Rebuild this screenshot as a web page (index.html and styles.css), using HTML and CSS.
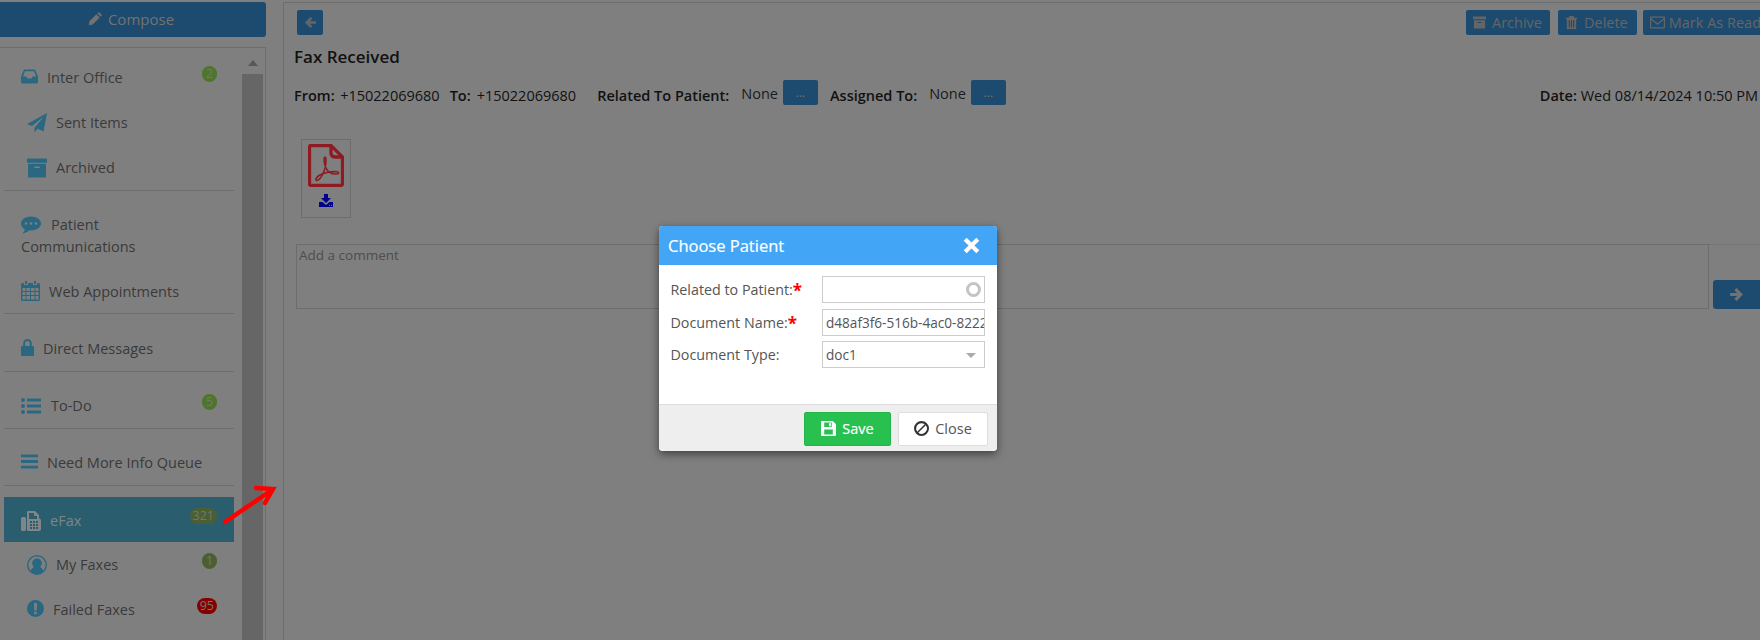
FILE: index.html
```html
<!DOCTYPE html>
<html lang="en">
<head>
<meta charset="utf-8">
<title>Fax Received</title>
<link rel="stylesheet" href="styles.css">
</head>
<body>
<div class="app">
  <aside class="side">
    <button class="compose"><svg class="ic ic-pencil" viewBox="0 0 16 16"><path d="M11.5 1 15 4.500 13.500 6 10 2.500ZM9 3.500 12.500 7 5 14.500 0.800 15.200 1.500 11Z"/></svg>Compose</button>
    <div class="navbox">
      <nav class="nav">
        <div class="group g1">
          <a class="item"><svg class="ic w17" viewBox="0 0 17 14"><path fill-rule="evenodd" d="M3 0H14L17 7V12.500Q17 14 15.500 14H1.500Q0 14 0 12.500V7ZM4 1.800 2 7H5.500L6.500 9H10.500L11.500 7H15L13 1.800Z"/></svg>Inter Office<span class="badge green">2</span></a>
          <a class="item sub"><svg class="ic w20" viewBox="0 0 20 20"><path d="M20 0 16.500 18.500 10.500 15.800 7.500 19.500V14.800L17 3.500 5 13 0 11Z"/></svg>Sent Items</a>
          <a class="item sub"><svg class="ic w20" viewBox="0 0 19 18"><path fill-rule="evenodd" d="M0 0H19V4H0ZM1 5H18V18H1ZM7 7.500V9H12V7.500Z"/></svg>Archived</a>
        </div>
        <div class="group g2">
          <a class="item wrap"><svg class="ic w20 mr10" viewBox="0 0 20 17"><path fill-rule="evenodd" d="M10 0C15.500 0 20 3 20 7S15.500 14 10 14L8 13.900C6 15.800 3.500 16.600 1.500 16.800 3 15.500 3.800 14 3.800 12.800 1.500 11.600 0 9.500 0 7 0 3 4.500 0 10 0ZM5 5.700A1.300 1.300 0 1 0 5 8.300 1.300 1.300 0 1 0 5 5.700ZM10 5.700A1.300 1.300 0 1 0 10 8.300 1.300 1.300 0 1 0 10 5.700ZM15 5.700A1.300 1.300 0 1 0 15 8.300 1.300 1.300 0 1 0 15 5.700Z"/></svg>Patient<br>Communications</a>
          <a class="item last"><svg class="ic w19" viewBox="0 0 19 20"><path fill-rule="evenodd" d="M4 0H6V3H4ZM13 0H15V3H13ZM1.500 2H3V4H7V2H12V4H16V2H17.500Q19 2 19 3.500V18.500Q19 20 17.500 20H1.500Q0 20 0 18.500V3.500Q0 2 1.500 2ZM1.500 7V10H4.500V7ZM5.500 7V10H9V7ZM10 7V10H13.500V7ZM14.500 7V10H17.500V7ZM1.500 11V14H4.500V11ZM5.500 11V14H9V11ZM10 11V14H13.500V11ZM14.500 11V14H17.500V11ZM1.500 15V18.500H4.500V15ZM5.500 15V18.500H9V15ZM10 15V18.500H13.500V15ZM14.500 15V18.500H17.500V15Z"/></svg>Web Appointments</a>
        </div>
        <div class="group g3">
          <a class="item"><svg class="ic w13" viewBox="0 0 13 17"><path fill-rule="evenodd" d="M6.500 0C9 0 10.800 1.800 10.800 4.300V7H12Q13 7 13 8V16Q13 17 12 17H1Q0 17 0 16V8Q0 7 1 7H2.200V4.300C2.200 1.800 4 0 6.500 0ZM6.500 2C5 2 4.200 3 4.200 4.300V7H8.800V4.300C8.800 3 8 2 6.500 2Z"/></svg>Direct Messages</a>
        </div>
        <div class="group g4">
          <a class="item"><svg class="ic w20" viewBox="0 0 20 16"><path d="M0 2A2 2 0 1 0 4 2 2 2 0 1 0 0 2ZM0 8A2 2 0 1 0 4 8 2 2 0 1 0 0 8ZM0 14A2 2 0 1 0 4 14 2 2 0 1 0 0 14ZM6 0.500H20V3.500H6ZM6 6.500H20V9.500H6ZM6 12.500H20V15.500H6Z"/></svg>To-Do<span class="badge green">5</span></a>
        </div>
        <div class="group g4">
          <a class="item"><svg class="ic w17" viewBox="0 0 17 14"><path d="M0 0H17V2.800H0ZM0 5.600H17V8.400H0ZM0 11.200H17V14H0Z"/></svg>Need More Info Queue</a>
        </div>
        <a class="item active"><svg class="ic w20 mr9" viewBox="0 0 20 20"><path fill-rule="evenodd" d="M1.500 6H3.500Q5 6 5 7.500V18.500Q5 20 3.500 20H1.500Q0 20 0 18.500V7.500Q0 6 1.500 6ZM7 0H14L18 4V7.300Q20 7.800 20 9.500V18Q20 20 18 20H7.500Q6 20 6 18.500V1Q6 0 7 0ZM8 2V8H16V5H13V2ZM9 10V12H11V10ZM12 10V12H14V10ZM15 10V12H17V10ZM9 13V15H11V13ZM12 13V15H14V13ZM15 13V15H17V13ZM9 16V18H11V16ZM12 16V18H14V16ZM15 16V18H17V16Z"/></svg>eFax<span class="badge olive">321</span></a>
        <a class="item sub"><svg class="ic w20" viewBox="0 0 20 20"><path fill-rule="evenodd" d="M10 0A10 10 0 1 1 10 20 10 10 0 1 1 10 0ZM10 1.500A8.500 8.500 0 0 0 3.800 15.800C4.500 13.500 5.800 12.500 7 12 5.800 11 5.200 9.700 5.200 8.300 5.200 5.700 7.300 3.600 10 3.600S14.800 5.700 14.800 8.300C14.800 9.700 14.200 11 13 12 14.200 12.500 15.500 13.500 16.200 15.800A8.500 8.500 0 0 0 10 1.500Z"/></svg>My Faxes<span class="badge olive">1</span></a>
        <a class="item sub"><svg class="ic w17" viewBox="0 0 17 17"><path fill-rule="evenodd" d="M8.500 0A8.500 8.500 0 1 1 8.500 17 8.500 8.500 0 1 1 8.500 0ZM7 3 7.300 10.500H9.700L10 3ZM7.200 11.800V14.300H9.800V11.800Z"/></svg>Failed Faxes<span class="badge red">95</span></a>
      </nav>
      <div class="scrollbar">
        <div class="sb-top"><span class="sb-arrow"></span></div>
        <div class="sb-thumb"></div>
      </div>
    </div>
  </aside>

  <main class="main">
    <div class="toolbar">
      <button class="btn btn-back"><svg class="ic-btn" viewBox="0 0 14 14"><path d="M7 1 9 3 6.300 5.600H13V8.400H6.300L9 11 7 13 1 7Z"/></svg></button>
      <div class="actions">
        <button class="btn"><svg class="ic-btn" viewBox="0 0 14 13"><path fill-rule="evenodd" d="M0 0H14V3H0ZM1 4H13V13H1ZM5 6V7H9V6Z"/></svg>Archive</button>
        <button class="btn btn-del"><svg class="ic-btn" viewBox="0 0 14 14"><path fill-rule="evenodd" d="M5 0H9L10 2H13V3.500H12V14H2V3.500H1V2H4ZM4 4.500V12.500H5.300V4.500ZM6.400 4.500V12.500H7.600V4.500ZM8.700 4.500V12.500H10V4.500Z"/></svg>Delete</button>
        <button class="btn btn-mark"><svg class="ic-btn wide" viewBox="0 0 15 12"><path fill-rule="evenodd" d="M1 0H14Q15 0 15 1V11Q15 12 14 12H1Q0 12 0 11V1Q0 0 1 0ZM1.200 1.200V1.800L7.500 6.800 13.800 1.800V1.200ZM1.200 3.300V10.800H13.800V3.300L7.500 8.400Z"/></svg>Mark As Read</button>
      </div>
    </div>
    <h1 class="title">Fax Received</h1>
    <div class="meta">
      <b class="k">From:</b><span class="v from">+15022069680</span>
      <b class="k to">To:</b><span class="v tov">+15022069680</span>
      <b class="k rel">Related To Patient:</b><span class="none">None</span><button class="btn dots">...</button>
      <b class="k asg">Assigned To:</b><span class="none none2">None</span><button class="btn dots">...</button>
      <span class="date"><b class="k">Date:</b> Wed 08/14/2024 10:50 PM</span>
    </div>
    <div class="attach">
      <svg class="pdf" viewBox="0 0 36 43"><path d="M3 1.500H23L34.500 13V39.500Q34.500 41.500 32.500 41.500H3Q1.500 41.500 1.500 39.500V3Q1.500 1.500 3 1.500Z" fill="none" stroke-width="3.300"/><path d="M23 1.500V9Q23 13 27 13H34.500" fill="none" stroke-width="3.300"/><path d="M17 13C15.500 13 16 20 18 24 19.500 27.500 23 30.500 29 30 31.500 29.500 31 28 29 27.800 24 27 16 28.800 11 31.500 8.500 33 7 36 8.500 36.500 11 37 15 31 17 24.500 18 20 18.500 13 17 13Z" fill="none" stroke-width="1.600"/></svg>
      <svg class="dl" viewBox="0 0 14 13"><path fill-rule="evenodd" d="M5 0H9V4H12L7 9 2 4H5ZM0 8H3.500L7 11 10.500 8H14V13H0ZM10 10.800V11.800H11V10.800ZM12 10.800V11.800H13V10.800Z"/></svg>
    </div>
    <div class="comment">
      <textarea class="comment-box" placeholder="Add a comment"></textarea>
      <button class="btn send"><svg class="ic-send" viewBox="0 0 14 14"><path d="M7 1 13 7 7 13 5 11 7.700 8.400H1V5.600H7.700L5 3Z"/></svg></button>
    </div>
  </main>
</div>

<div class="overlay"></div>

<svg class="annot" viewBox="0 0 56 42"><path d="M3 39 50 7M34 5 51 6 43 20" fill="none" stroke="#f00" stroke-width="4.500" stroke-linecap="round"/></svg>

<section class="modal">
  <header class="modal-head">
    <h2 class="modal-title">Choose Patient</h2>
    <svg class="modal-x" viewBox="0 0 14 14"><path d="M3 .6 7 4.600 11 .6 13.400 3 9.400 7 13.400 11 11 13.400 7 9.400 3 13.400 .6 11 4.600 7 .6 3Z"/></svg>
  </header>
  <div class="modal-body">
    <label class="lbl">Related to Patient:<span class="req">*</span></label>
    <div class="field"><input class="inp" type="text"><span class="ring"></span></div>
    <label class="lbl">Document Name:<span class="req">*</span></label>
    <div class="field"><input class="inp" type="text" value="d48af3f6-516b-4ac0-8222-6a1c03d7e9f4"></div>
    <label class="lbl">Document Type:</label>
    <div class="field"><input class="inp" type="text" value="doc1"><span class="caret"></span></div>
  </div>
  <footer class="modal-foot">
    <button class="mbtn save"><svg class="ic-m" viewBox="0 0 14 14"><path fill-rule="evenodd" d="M1 0H11L14 3V13Q14 14 13 14H1Q0 14 0 13V1Q0 0 1 0ZM3 1.500V5.500H10V1.500ZM3 8V12.500H11V8ZM7.500 2H9.300V5H7.500Z"/></svg>Save</button>
    <button class="mbtn close"><svg class="ic-m" viewBox="0 0 14 14"><path fill-rule="evenodd" d="M7 0A7 7 0 1 1 7 14 7 7 0 1 1 7 0ZM7 2A5 5 0 0 0 3 10L10 3A5 5 0 0 0 7 2ZM11 4 4 11A5 5 0 0 0 11 4Z"/></svg>Close</button>
  </footer>
</section>
</body>
</html>
```
FILE: styles.css
```css
* { box-sizing: border-box; }
html, body { margin: 0; height: 100%; overflow: hidden; }
body { width: 1760px; height: 640px; background: #cecece; font: 14.500px/22px "Open Sans", "Liberation Sans", sans-serif; color: #5e5e5e; position: relative; }
button { font-family: inherit; }
.app { display: flex; height: 640px; }

/* sidebar */
.side { width: 266px; flex: none; padding-top: 2px; }
.compose { display: flex; align-items: center; justify-content: center; width: 266px; height: 35px; border: 0; border-radius: 0 3px 3px 0; background: #3078b3; color: #b8b8b8; font-size: 15px; padding: 0 4px 2px 0; }
.compose .ic-pencil { width: 15px; height: 15px; margin-right: 5px; fill: #b8b8b8; vertical-align: 0; }
.navbox { display: flex; margin-top: 10px; height: 593px; width: 266px; border-top: 1px solid #b1b1b1; border-right: 1px solid #b1b1b1; }
.nav { width: 242px; padding-left: 4px; flex: none; }
.scrollbar { width: 21px; flex: none; display: flex; flex-direction: column; }
.sb-top { height: 26px; display: flex; justify-content: center; padding-top: 12px; }
.sb-arrow { width: 0; height: 0; border: 5.500px solid transparent; border-top: 0; border-bottom: 6px solid #8e8e8e; }
.sb-thumb { flex: 1; background: #a5a5a5; }
.group { border-bottom: 1px solid #b1b1b1; width: 230px; }
.g1 { padding-top: 7px; }
.g2 { padding-top: 10px; }
.g3 { padding-top: 12px; }
.g4 { padding-top: 11px; }
.item { display: block; position: relative; width: 230px; padding: 11.500px 0 11.500px 17px; line-height: 22px; color: #5e5e5e; }
.item.sub { padding-left: 23px; }
.item.wrap { padding-top: 12.500px; padding-bottom: 12px; }
.item.last { padding-bottom: 10px; }
.item.active { margin-top: 11px; background: #4598b2; color: #c9d6dc; padding-top: 13px; padding-bottom: 10px; }
.ic { display: inline-block; vertical-align: -2px; fill: #44a8d2; height: 17px; margin-right: 10px; }
.active .ic { fill: #cfd8dc; }
.w13 { width: 13px; margin-right: 9px; }
.w17 { width: 17px; margin-right: 9px; }
.w19 { width: 19px; margin-right: 9px; height: 20px; vertical-align: -4px; }
.w20 { width: 20px; height: 20px; vertical-align: -5px; }
.sub .ic { margin-right: 9px; }
.mr9 { margin-right: 9px; }
.mr10 { margin-right: 10px; }
.badge { position: absolute; right: 17px; top: 11px; min-width: 15px; height: 16px; padding: 0 3px; border-radius: 8px; font-size: 12.500px; line-height: 16px; text-align: center; color: #bcbcbc; }
.green { background: #80bb48; }
.olive { background: #7a9a52; }
.red { background: #d60000; }

/* main */
.main { flex: 1; min-width: 0; margin-left: 17px; margin-top: 2px; border-left: 1px solid #b1b1b1; border-top: 1px solid #b1b1b1; padding-left: 10px; overflow: hidden; color: #1c1c1c; }
.toolbar { display: flex; height: 25px; margin-top: 7px; padding-left: 3px; }
.actions { display: flex; gap: 8px; margin-left: 1143px; flex: none; }
.btn { display: flex; align-items: center; justify-content: center; flex: none; height: 25px; border: 0; border-radius: 2px; padding: 0 8px 0 7px; background: #3078b3; color: #a3a3a3; font-size: 14.500px; }
.btn-back { width: 26px; padding: 0; }
.btn-del { padding-right: 9px; }
.btn-mark { margin-left: -2px; }
.ic-btn { width: 13px; height: 13px; fill: #a3a3a3; margin-right: 6px; }
.ic-btn.wide { width: 15px; margin-right: 4px; }
.btn-back .ic-btn { margin: 0; }
.title { margin: 11px 0 0; font-size: 17px; line-height: 22px; font-weight: 600; color: #1c1c1c; }
.meta { display: flex; align-items: center; height: 25px; margin-top: 15px; white-space: nowrap; }
.k { font-weight: 600; flex: none; }
.v { flex: none; }
.from { margin-left: 5.500px; }
.to { margin-left: 10px; }
.tov { margin-left: 6px; }
.rel { margin-left: 21px; }
.none { margin-left: 12px; margin-top: -3px; color: #2e2e2e; }
.dots { width: 35px; padding: 0; margin: 0 0 7px 5px; font-size: 12px; color: #b8b8b8; }
.asg { margin-left: 12px; }
.date { flex: none; margin-left: 534px; }
.attach { width: 50px; height: 79px; margin: 31px 0 0 7px; border: 1px solid #b1b1b1; display: flex; flex-direction: column; align-items: center; padding-top: 4px; }
.pdf { width: 36px; height: 43px; stroke: #e52c36; flex: none; }
.dl { width: 14px; height: 13px; fill: #0000e0; margin-top: 7px; flex: none; }
.comment { display: flex; align-items: flex-end; margin: 26px 0 0 2px; border-top: 1px solid #bcbcbc; height: 71px; padding-bottom: 6px; }
.comment-box { display: block; width: 1413px; height: 65px; margin-top: 0; resize: none; border: 1px solid #b1b1b1; background: transparent; font: 13.500px/17px "Open Sans", "Liberation Sans", sans-serif; padding: 2px; outline: 0; }
.comment-box::placeholder { color: #7d7d7d; opacity: 1; }
.send { width: 47px; height: 29px; margin-left: 4px; padding: 0; border-radius: 3px 0 0 3px; }
.ic-send { width: 15px; height: 15px; fill: #b8b8b8; }

/* overlay, annotation */
.overlay { position: absolute; inset: 0; background: rgba(0, 0, 0, .38); }
.annot { position: absolute; left: 222px; top: 483px; width: 56px; height: 42px; }

/* modal */
.modal { position: absolute; left: 659px; top: 226px; width: 338px; height: 225px; border-radius: 4px; background: #fff; box-shadow: 0 3px 9px rgba(0, 0, 0, .5); display: flex; flex-direction: column; overflow: hidden; color: #555; }
.modal-head { height: 39px; background: #42a5f5; display: flex; align-items: center; justify-content: space-between; padding: 0 17px 0 9px; flex: none; }
.modal-title { margin: 0; font-size: 16.500px; font-weight: 400; color: #fff; -webkit-text-stroke: .2px #fff; }
.modal-x { width: 17px; height: 17px; fill: #fff; }
.modal-body { flex: 1; display: grid; grid-template-columns: 151.500px 163px; grid-auto-rows: 27px; row-gap: 5.500px; padding: 11px 0 0 11.500px; font-size: 14.300px; }
.lbl { line-height: 27px; white-space: nowrap; }
.req { color: #f00; font-size: 17px; font-weight: 700; line-height: 14px; vertical-align: -2px; }
.field { position: relative; }
.inp { width: 100%; height: 27px; border: 1px solid #ccc; padding: 0 0 0 3px; font: 13.600px "Open Sans", "Liberation Sans", sans-serif; color: #555; outline: 0; }
.ring { position: absolute; right: 4px; top: 6px; width: 15px; height: 15px; border: 3px solid #c4c4c4; border-radius: 50%; }
.caret { position: absolute; right: 9px; top: 12px; width: 0; height: 0; border: 5.500px solid transparent; border-bottom: 0; border-top: 5px solid #aaa; }
.modal-foot { height: 47px; flex: none; background: #eee; border-top: 1px solid #ddd; display: flex; justify-content: flex-end; gap: 7px; padding: 7px 9px 0 0; }
.mbtn { display: flex; align-items: center; justify-content: center; height: 34px; border-radius: 2px; font-size: 14.500px; padding: 0 0 1px; }
.save { width: 87px; border: 1px solid #25b449; background: #28c04f; color: #fff; font-weight: 400; -webkit-text-stroke: .2px #fff; }
.close { width: 90px; border: 1px solid #ddd; background: #fff; color: #555; }
.ic-m { width: 15px; height: 15px; margin-right: 6px; fill: currentColor; }
.close .ic-m { fill: #333; }
```
